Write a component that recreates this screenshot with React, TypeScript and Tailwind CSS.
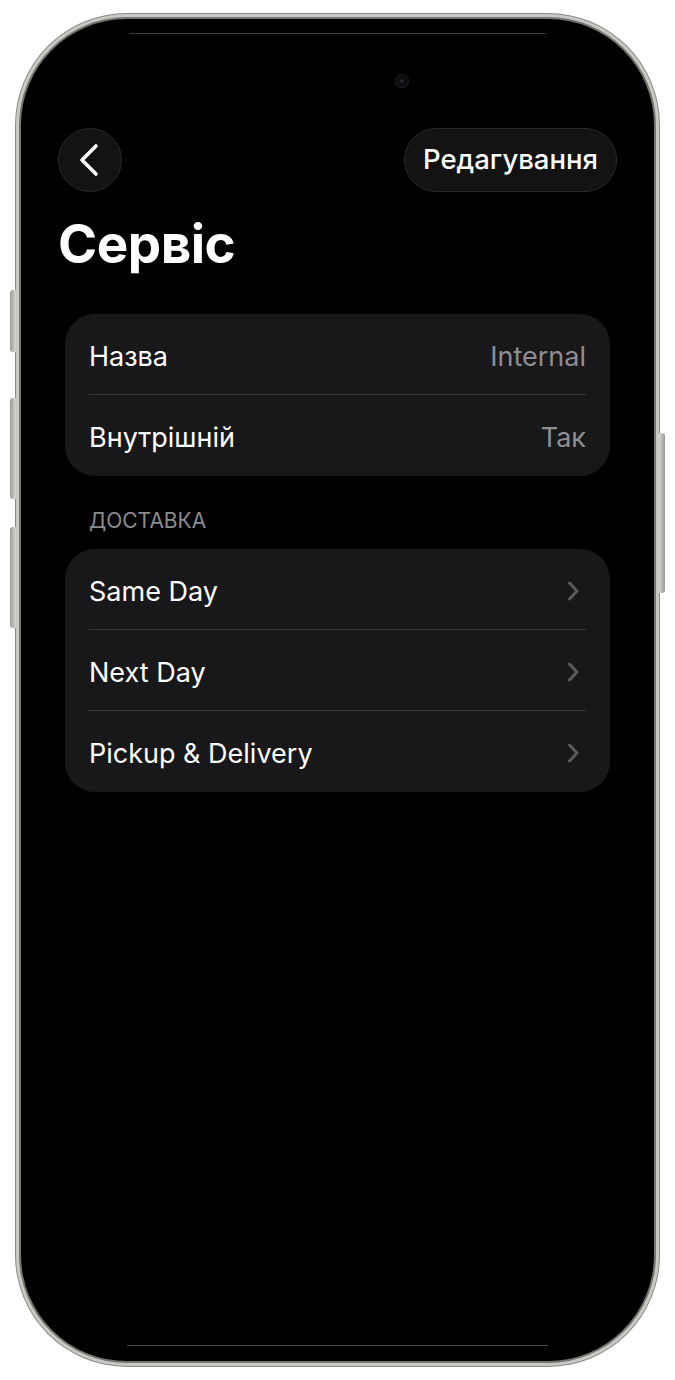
import React from "react";

const font = { fontFamily: "Inter, 'Noto Sans', sans-serif" } as const;

function Chevron() {
  return (
    <svg width="14" height="22" viewBox="0 0 14 22" fill="none" className="mr-[6px]">
      <path d="M3.5 3 L11 11 L3.5 19" stroke="#5b5b5f" strokeWidth="3" strokeLinecap="round" strokeLinejoin="round" />
    </svg>
  );
}

function Row({ label, value, chevron, last }: { label: string; value?: string; chevron?: boolean; last?: boolean }) {
  return (
    <div className="relative flex h-[81px] items-center justify-between px-[24px] pt-[3px]">
      <span className="text-[27px] leading-none text-white">{label}</span>
      {value && <span className="text-[27px] leading-none text-[#8e8e93]">{value}</span>}
      {chevron && <Chevron />}
      {!last && <div className="absolute bottom-0 left-[24px] right-[24px] h-px bg-[#38383a]" />}
    </div>
  );
}

export default function App() {
  return (
    <div className="relative h-[1380px] w-[675px] overflow-hidden bg-white" style={font}>
      {/* side buttons */}
      <div className="absolute left-[10px] top-[290px] h-[62px] w-[6px] rounded-l-[3px] bg-gradient-to-r from-[#9a9a96] to-[#d6d6d2]" />
      <div className="absolute left-[10px] top-[398px] h-[101px] w-[6px] rounded-l-[3px] bg-gradient-to-r from-[#9a9a96] to-[#d6d6d2]" />
      <div className="absolute left-[10px] top-[527px] h-[101px] w-[6px] rounded-l-[3px] bg-gradient-to-r from-[#9a9a96] to-[#d6d6d2]" />
      <div className="absolute left-[659px] top-[433px] h-[160px] w-[6px] rounded-r-[3px] bg-gradient-to-l from-[#9a9a96] to-[#d6d6d2]" />

      <div className="ml-[15px] mt-[13px] h-[1354px] w-[645px] rounded-[112px] bg-[#8a8a86] p-[1px]">
        <div className="h-full w-full rounded-[111px] bg-[#c8c8c4] p-[3px]">
          <div className="h-full w-full rounded-[108px] bg-[#747470] p-[2px]">
            <div className="relative h-full w-full overflow-hidden rounded-[106px] bg-black">
              {/* top & bottom screen lines */}
              <div className="absolute left-[108px] right-[108px] top-[14px] h-px bg-[#3a3a3a]" />
              <div className="absolute left-[106px] right-[106px] bottom-[15px] h-px bg-[#4a4a4a]" />
              {/* camera */}
              <div className="absolute left-[375px] top-[56px] h-[12px] w-[12px] rounded-full bg-[#0d0d10] ring-1 ring-[#1e1e22]">
                <div className="ml-[4px] mt-[4px] h-[4px] w-[4px] rounded-full bg-[#26262c]" />
              </div>

              <div className="flex flex-col pt-[109px]">
                <div className="flex items-center justify-between px-[37px]">
                  <div className="flex h-[64px] w-[64px] items-center justify-center rounded-full border border-[#2a2a2c] bg-[#131313]">
                    <svg width="22" height="34" viewBox="0 0 22 34" fill="none" className="mr-[3px]">
                      <path d="M18 3 L4 17 L18 31" stroke="white" strokeWidth="3.6" strokeLinecap="round" strokeLinejoin="round" />
                    </svg>
                  </div>
                  <div className="flex h-[64px] items-center rounded-full border border-[#2a2a2c] bg-[#131313] px-[18px]">
                    <span className="text-[27.5px] font-medium text-white">Редагування</span>
                  </div>
                </div>

                <h1 className="mt-[21px] pl-[37px] text-[53px] font-bold leading-[62px] tracking-[-0.5px] text-white">Сервіс</h1>

                <div className="mx-[44px] mt-[39px] overflow-hidden rounded-[30px] bg-[#18181a]">
                  <Row label="Назва" value="Internal" />
                  <Row label="Внутрішній" value="Так" last />
                </div>

                <div className="mt-[34px] pl-[68px] text-[21px] uppercase leading-none text-[#8b8b90]">ДОСТАВКА</div>

                <div className="mx-[44px] mt-[18px] overflow-hidden rounded-[30px] bg-[#18181a]">
                  <Row label="Same Day" chevron />
                  <Row label="Next Day" chevron />
                  <Row label="Pickup & Delivery" chevron last />
                </div>
              </div>
            </div>
          </div>
        </div>
      </div>
    </div>
  );
}
